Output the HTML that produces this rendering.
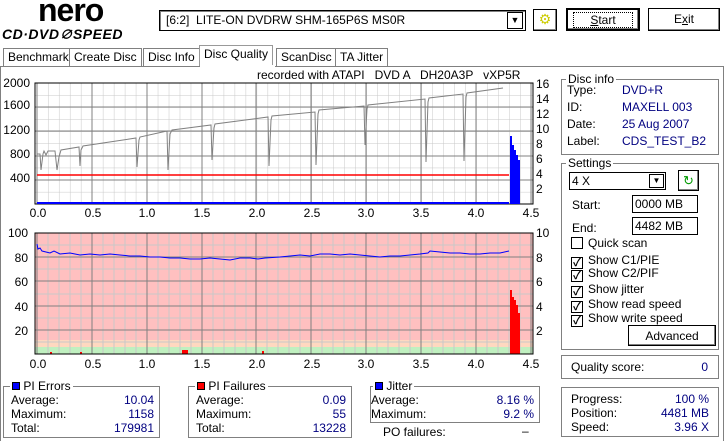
<!DOCTYPE html>
<html><head><meta charset="utf-8"><style>
*{margin:0;padding:0;box-sizing:border-box}
body{width:724px;height:441px;background:#fff;font-family:"Liberation Sans","Noto Sans CJK JP",sans-serif;font-size:12px;color:#000;position:relative;overflow:hidden}
.a{position:absolute;white-space:nowrap}
.fr{position:absolute;border:1px solid #808080;box-shadow:1px 1px 0 #fff inset,1px 1px 0 #fff}
.lg{position:absolute;background:#fff;padding:0 2px;top:-8px;left:6px}
.bl{color:#000080}
.btn{position:absolute;background:#fff;border:1px solid #000;box-shadow:inset -1px -1px 0 #808080;text-align:center;line-height:20px}
.cb{display:inline-block;width:12px;height:12px;border:1px solid #000;vertical-align:-2px;margin-right:5px;font-size:11px;line-height:10px;text-align:center;font-weight:bold}
.tab{position:absolute;top:48px;height:18px;border:1px solid #808080;border-bottom:none;padding:0 4px;line-height:17px;background:#fff}
</style></head><body>
<div class="a" style="left:38px;top:-8px;font-size:32px;font-weight:900;letter-spacing:-1px;font-family:'Liberation Sans',sans-serif">nero</div>
<div class="a" style="left:2px;top:24px;font-size:14px;font-weight:bold;font-style:italic;letter-spacing:0.5px">CD·DVD<span style="font-size:13px">∅</span>SPEED</div>
<div class="a" style="left:159px;top:10px;width:367px;height:21px;border:1px solid #000;box-shadow:inset 1px 1px 0 #808080;padding-left:6px;line-height:19px">[6:2]&nbsp; LITE-ON DVDRW SHM-165P6S MS0R</div>
<div class="a" style="left:507px;top:12px;width:16px;height:17px;border:1px solid #000;text-align:center;font-size:9px;line-height:15px">▼</div>
<div class="btn" style="left:533px;top:9px;width:24px;height:22px;color:#cc0;font-size:14px;line-height:19px">⚙</div>
<div class="btn" style="left:566px;top:8px;width:74px;height:23px;border:2px solid #000"><span style="border:1px dotted #000;padding:0 16px"><u>S</u>tart</span></div>
<div class="btn" style="left:648px;top:8px;width:72px;height:23px">E<u>x</u>it</div>
<div class="tab" style="left:3px">Benchmark</div>
<div class="tab" style="left:69px">Create Disc</div>
<div class="tab" style="left:143px">Disc Info</div>
<div class="tab" style="left:199px;top:45px;height:22px;border-color:#999">Disc Quality</div>
<div class="tab" style="left:276px">ScanDisc</div>
<div class="tab" style="left:335px">TA Jitter</div>
<div class="a" style="left:0;top:66px;width:724px;height:375px;border:1px solid #808080;border-bottom:none"></div>
<div class="a" style="left:200px;top:65px;width:75px;height:2px;background:#fff"></div>
<div class="a" style="left:257px;top:68px">recorded with ATAPI &nbsp; DVD A &nbsp; DH20A3P &nbsp; vXP5R</div>
<svg class="a" style="left:0;top:70px" width="560" height="300" font-family="Liberation Sans" font-size="12">
<defs>
<pattern id="g1" x="37" y="83" width="10.98" height="12.1" patternUnits="userSpaceOnUse"><path d="M0 0V13M0 0H11" stroke="#c8c8c8" fill="none"/></pattern>
</defs>
<g transform="translate(0,-70)">
<rect x="35" y="83" width="498" height="121" fill="#fff"/>
<rect x="35" y="83" width="498" height="121" fill="url(#g1)"/>
<g stroke="#808080">
<path d="M37 83V204M92 83V204M147 83V204M202 83V204M256 83V204M311 83V204M366 83V204M421 83V204M476 83V204M531 83V204"/>
<path d="M35 107H533M35 131H533M35 156H533M35 180H533"/>
</g>
<rect x="35" y="83" width="498" height="121" fill="none" stroke="#000"/>
<g fill="#000" text-anchor="end"><text x="30" y="87">2000</text><text x="30" y="109">1600</text><text x="30" y="134">1200</text><text x="30" y="158">800</text><text x="30" y="182">400</text></g>
<g fill="#000"><text x="536" y="88">16</text><text x="536" y="103">14</text><text x="536" y="118">12</text><text x="536" y="133">10</text><text x="536" y="148">8</text><text x="536" y="163">6</text><text x="536" y="178">4</text><text x="536" y="193">2</text></g>
<polyline fill="none" stroke="#808080" points="37,154 40,154 41,170 43,154 44,151 46,155 48,151 55,151 57,170 59,157 61,150 79,147 80,166 81,150 83,146 136,138 137,167 139,140 140,137 167,131 168,170 170,134 172,130 211,125 212,160 214,128 215,124 268,117 269,166 271,120 272,116 315,112 316,165 318,114 319,110 364,106 365,145 367,109 368,105 425,99 426,162 428,102 429,98 463,94 464,161 466,97 467,93 503,88"/>
<path d="M37 175H509" stroke="#f00" stroke-width="1.5"/>
<path d="M37 203H509" stroke="#00f" stroke-width="2"/>
<g fill="#00f"><rect x="510" y="136" width="2" height="68"/><rect x="512" y="145" width="2" height="59"/><rect x="514" y="150" width="2" height="54"/><rect x="516" y="155" width="2" height="49"/><rect x="518" y="160" width="2" height="44"/></g>
<g fill="#000" text-anchor="middle"><text x="38" y="217">0.0</text><text x="93" y="217">0.5</text><text x="147" y="217">1.0</text><text x="202" y="217">1.5</text><text x="257" y="217">2.0</text><text x="312" y="217">2.5</text><text x="366" y="217">3.0</text><text x="421" y="217">3.5</text><text x="476" y="217">4.0</text><text x="531" y="217">4.5</text></g>
<rect x="35" y="233" width="498" height="121" fill="#ffc0c0"/>
<rect x="35" y="340" width="498" height="7" fill="#ffd8c0"/>
<rect x="35" y="347" width="498" height="7" fill="#c0f0c0"/>
<g stroke="#c8c8c8"><path d="M48 233V354M59 233V354M70 233V354M81 233V354M103 233V354M114 233V354M125 233V354M136 233V354M158 233V354M169 233V354M180 233V354M191 233V354M213 233V354M224 233V354M235 233V354M246 233V354M267 233V354M278 233V354M289 233V354M300 233V354M322 233V354M333 233V354M344 233V354M355 233V354M377 233V354M388 233V354M399 233V354M410 233V354M432 233V354M443 233V354M454 233V354M465 233V354M487 233V354M498 233V354M509 233V354M520 233V354"/><path d="M35 245H533M35 269H533M35 294H533M35 318H533M35 342H533"/></g>
<g stroke="#808080"><path d="M37 233V354M92 233V354M147 233V354M202 233V354M256 233V354M311 233V354M366 233V354M421 233V354M476 233V354M531 233V354"/><path d="M35 257H533M35 281H533M35 306H533M35 330H533"/></g>
<polyline fill="none" stroke="#00f" points="37,244 38,249 40,248 42,251 46,252 50,253 54,251 60,254 70,253 80,255 90,254 100,255 110,254 120,255 130,256 140,256 150,257 160,257 170,258 180,258 190,259 200,259 210,258 220,259 230,260 240,258 250,258 258,259 265,258 280,257 290,256 300,255 310,256 320,254 330,254 340,255 350,254 360,255 370,256 380,257 390,256 400,256 410,255 420,254 428,253 430,251 440,252 450,253 460,253 470,254 480,254 490,253 500,253 509,251"/>
<g fill="#f00"><rect x="182" y="350" width="6" height="4"/><rect x="50" y="352" width="2" height="2"/><rect x="80" y="352" width="2" height="2"/><rect x="262" y="351" width="2" height="3"/>
<rect x="510" y="290" width="2" height="64"/><rect x="512" y="297" width="2" height="57"/><rect x="514" y="300" width="2" height="54"/><rect x="516" y="305" width="2" height="49"/><rect x="518" y="313" width="2" height="41"/></g>
<rect x="35" y="233" width="498" height="121" fill="none" stroke="#000"/>
<g fill="#000" text-anchor="end"><text x="28" y="237">100</text><text x="28" y="262">80</text><text x="28" y="286">60</text><text x="28" y="311">40</text><text x="28" y="335">20</text></g>
<g fill="#000"><text x="536" y="237">10</text><text x="536" y="262">8</text><text x="536" y="286">6</text><text x="536" y="311">4</text><text x="536" y="335">2</text></g>
<g fill="#000" text-anchor="middle"><text x="38" y="368">0.0</text><text x="93" y="368">0.5</text><text x="147" y="368">1.0</text><text x="202" y="368">1.5</text><text x="257" y="368">2.0</text><text x="312" y="368">2.5</text><text x="366" y="368">3.0</text><text x="421" y="368">3.5</text><text x="476" y="368">4.0</text><text x="531" y="368">4.5</text></g>
</g></svg>
<div class="fr" style="left:3px;top:386px;width:157px;height:52px"><span class="lg"><span style="display:inline-block;width:8px;height:8px;background:#00f;border:1px solid #000"></span> PI Errors</span>
<div class="a" style="left:7px;top:6px">Average:</div><div class="a bl" style="right:5px;top:6px">10.04</div>
<div class="a" style="left:7px;top:20px">Maximum:</div><div class="a bl" style="right:5px;top:20px">1158</div>
<div class="a" style="left:7px;top:34px">Total:</div><div class="a bl" style="right:5px;top:34px">179981</div></div>
<div class="fr" style="left:188px;top:386px;width:164px;height:52px"><span class="lg"><span style="display:inline-block;width:8px;height:8px;background:#f00;border:1px solid #000"></span> PI Failures</span>
<div class="a" style="left:7px;top:6px">Average:</div><div class="a bl" style="right:5px;top:6px">0.09</div>
<div class="a" style="left:7px;top:20px">Maximum:</div><div class="a bl" style="right:5px;top:20px">55</div>
<div class="a" style="left:7px;top:34px">Total:</div><div class="a bl" style="right:5px;top:34px">13228</div></div>
<div class="fr" style="left:370px;top:386px;width:170px;height:37px"><span class="lg" style="left:2px"><span style="display:inline-block;width:8px;height:8px;background:#00f;border:1px solid #000"></span> Jitter</span>
<div class="a" style="left:0px;top:6px">Average:</div><div class="a bl" style="right:5px;top:6px">8.16 %</div>
<div class="a" style="left:0px;top:20px">Maximum:</div><div class="a bl" style="right:5px;top:20px">9.2 %</div></div>
<div class="a" style="left:383px;top:425px">PO failures:</div><div class="a" style="left:522px;top:424px">–</div>
<div class="fr" style="left:561px;top:79px;width:158px;height:76px"><span class="lg" style="left:4px">Disc info</span>
<div class="a" style="left:5px;top:3px">Type:</div><div class="a bl" style="left:60px;top:3px">DVD+R</div>
<div class="a" style="left:5px;top:20px">ID:</div><div class="a bl" style="left:60px;top:20px">MAXELL 003</div>
<div class="a" style="left:5px;top:37px">Date:</div><div class="a bl" style="left:60px;top:37px">25 Aug 2007</div>
<div class="a" style="left:5px;top:54px">Label:</div><div class="a bl" style="left:60px;top:54px">CDS_TEST_B2</div></div>
<div class="fr" style="left:561px;top:163px;width:158px;height:187px"><span class="lg" style="left:4px">Settings</span>
<div class="a" style="left:7px;top:8px;width:97px;height:18px;border:1px solid #000;padding-left:2px;line-height:16px">4 X<span style="position:absolute;right:1px;top:1px;width:15px;height:14px;border:1px solid #000;font-size:8px;line-height:12px;text-align:center">▼</span></div>
<div class="a" style="left:116px;top:6px;width:21px;height:21px;border:1px solid #000;box-shadow:inset -1px -1px 0 #808080;color:#090;font-size:13px;text-align:center;line-height:19px">↻</div>
<div class="a" style="left:10px;top:34px">Start:</div><div class="a" style="left:70px;top:31px;width:66px;height:18px;border:1px solid #000;padding-left:2px;line-height:16px">0000 MB</div>
<div class="a" style="left:10px;top:57px">End:</div><div class="a" style="left:70px;top:53px;width:66px;height:18px;border:1px solid #000;padding-left:2px;line-height:16px">4482 MB</div>
<div class="a" style="left:9px;top:72px"><span class="cb"></span>Quick scan</div>
<div class="a" style="left:9px;top:89px"><span class="cb">✓</span>Show C1/PIE</div>
<div class="a" style="left:9px;top:102px"><span class="cb">✓</span>Show C2/PIF</div>
<div class="a" style="left:9px;top:118px"><span class="cb">✓</span>Show jitter</div>
<div class="a" style="left:9px;top:133px"><span class="cb">✓</span>Show read speed</div>
<div class="a" style="left:9px;top:147px"><span class="cb">✓</span>Show write speed</div>
<div class="btn" style="left:66px;top:161px;width:88px;height:21px">Advanced</div></div>
<div class="fr" style="left:561px;top:355px;width:158px;height:24px"><div class="a" style="left:9px;top:4px">Quality score:</div><div class="a bl" style="right:10px;top:4px">0</div></div>
<div class="fr" style="left:561px;top:387px;width:158px;height:50px">
<div class="a" style="left:9px;top:4px">Progress:</div><div class="a bl" style="right:9px;top:4px">100 %</div>
<div class="a" style="left:9px;top:18px">Position:</div><div class="a bl" style="right:9px;top:18px">4481 MB</div>
<div class="a" style="left:9px;top:32px">Speed:</div><div class="a bl" style="right:9px;top:32px">3.96 X</div></div>
</body></html>
